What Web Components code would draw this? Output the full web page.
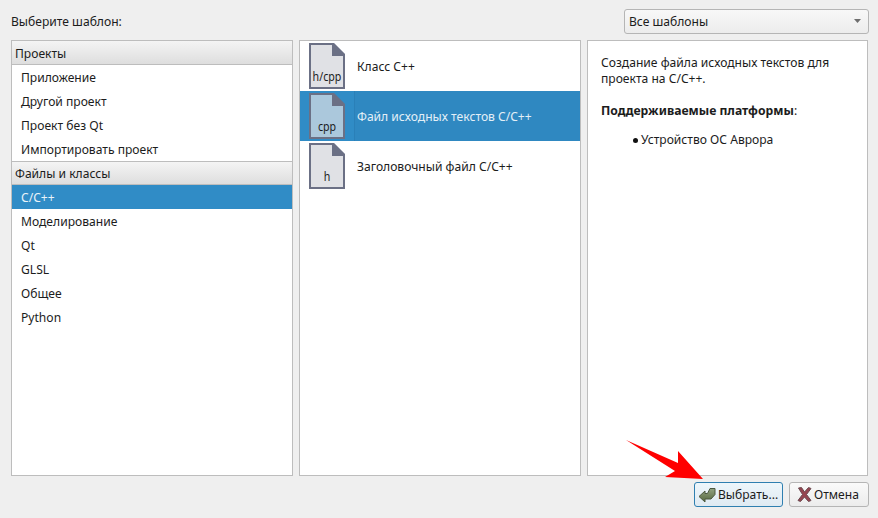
<!DOCTYPE html>
<html>
<head>
<meta charset="utf-8">
<title>Новый файл</title>
<style>
  html, body { margin: 0; height: 100%; }
  body { background: #efefef; }
</style>
</head>
<body>
<template id="file-icon-tpl">
  <style>
    :host { display: block; width: 36px; height: 46px; position: relative; flex: none; }
    svg { display: block; }
    span {
      position: absolute; left: 0; right: 0; bottom: 5px; text-align: center;
      font-size: 13px; line-height: 16px; color: #1c1c1c;
      transform: scaleX(.82);
    }
  </style>
  <svg width="36" height="46" viewBox="0 0 36 46">
    <path id="sheet" d="M1 1H24L35 12V45H1Z" fill="#e0e1e5" stroke="#6b7085" stroke-width="2"/>
    <path d="M23 0H25L36 11V13H23Z" fill="#6b7085"/>
  </svg>
  <span><slot></slot></span>
</template>

<wizard-dialog>
</wizard-dialog>

<script>
const appFont = '"Noto Sans", "Open Sans", sans-serif';

class FileIcon extends HTMLElement {
  constructor() {
    super();
    this.attachShadow({ mode: 'open' });
    this.shadowRoot.appendChild(document.getElementById('file-icon-tpl').content.cloneNode(true));
  }
  connectedCallback() {
    if (this.hasAttribute('selected')) {
      this.shadowRoot.querySelector('#sheet').setAttribute('fill', '#abc8dc');
    }
  }
}

class CategoryHeader extends HTMLElement {
  constructor() {
    super();
    this.attachShadow({ mode: 'open' });
    this.shadowRoot.innerHTML = `
      <style>
        :host {
          display: flex; align-items: center; height: 21px; padding: 2px 0 0 3px;
          background: linear-gradient(#f4f4f4, #dedede);
          border-bottom: 1px solid #bdbdbd;
          color: #1c1c1c;
        }
        :host([divided]) { border-top: 1px solid #bdbdbd; padding-top: 1px; }
      </style>
      <slot></slot>`;
  }
}

class CategoryItem extends HTMLElement {
  constructor() {
    super();
    this.attachShadow({ mode: 'open' });
    this.shadowRoot.innerHTML = `
      <style>
        :host {
          display: flex; align-items: center; height: 24px; box-sizing: border-box; padding: 1px 0 0 9px;
          color: #1c1c1c;
        }
        :host([selected]) { background: #308cc6; color: #eaf3f9; }
      </style>
      <slot></slot>`;
  }
}

class TemplateRow extends HTMLElement {
  constructor() {
    super();
    this.attachShadow({ mode: 'open' });
    this.shadowRoot.innerHTML = `
      <style>
        :host {
          display: flex; align-items: center; height: 50px; padding-left: 9px;
          color: #1c1c1c; box-sizing: border-box;
        }
        :host([selected]) { background: #308cc6; color: #e3eff7; }
        .label { display: flex; align-items: center; height: 100%; margin-left: 9px; padding: 1px 0 0 3px; flex: 1; box-sizing: border-box; }
        :host([selected]) .label { border-left: 1px solid #2a80b8; padding-left: 2px; background: #2f88c1; }
      </style>
      <slot name="icon"></slot>
      <div class="label"><slot></slot></div>`;
  }
}

class ListPanel extends HTMLElement {
  constructor() {
    super();
    this.attachShadow({ mode: 'open' });
    this.shadowRoot.innerHTML = `
      <style>
        :host {
          display: block; background: #fff; border: 1px solid #bdbdbd;
          box-sizing: border-box; min-width: 0;
        }
      </style>
      <slot></slot>`;
  }
}

class ComboBox extends HTMLElement {
  constructor() {
    super();
    this.attachShadow({ mode: 'open' });
    this.shadowRoot.innerHTML = `
      <style>
        :host {
          display: flex; align-items: center; justify-content: space-between;
          width: 245px; height: 25px; box-sizing: border-box; padding: 1px 5px 0 4px;
          border: 1px solid #b5b5b5; border-radius: 3px;
          background: linear-gradient(#f8f8f8, #ececec);
          color: #1c1c1c;
        }
        svg { display: block; margin: -2px 2px 0 0; }
      </style>
      <slot></slot>
      <svg width="7" height="4" viewBox="0 0 7 4"><path d="M0 0H7L3.5 4Z" fill="#6e6e6e"/></svg>`;
  }
}

class PushButton extends HTMLElement {
  constructor() {
    super();
    this.attachShadow({ mode: 'open' });
    this.shadowRoot.innerHTML = `
      <style>
        :host {
          display: flex; align-items: center; height: 25px; box-sizing: border-box;
          gap: 2px; padding-left: 3px;
          border: 1px solid #b5b5b5; border-radius: 3px;
          background: linear-gradient(#fafafa, #ececec);
          color: #1c1c1c;
        }
        :host([default]) {
          border-color: #2f7fb0;
          background: linear-gradient(#eef6fb, #dfeaf2);
        }
      </style>
      <slot name="icon"></slot><slot></slot>`;
  }
}

class WizardDialog extends HTMLElement {
  constructor() {
    super();
    this.attachShadow({ mode: 'open' });
    this.shadowRoot.innerHTML = `
      <style>
        :host {
          display: flex; flex-direction: column; height: 518px; box-sizing: border-box;
          padding: 9px 9px 11px 11px; position: relative; overflow: hidden;
          font: 12.1px/16px ${appFont}; color: #1c1c1c;
        }
        .top { display: flex; align-items: center; justify-content: space-between; height: 24px; }
        .top > span { padding-top: 1px; }
        .panels { display: grid; grid-template-columns: 282px 282px 281px; gap: 6px; height: 436px; margin-top: 7px; }
        .info { padding: 14px 13px; line-height: 16px; }
        .info p { margin: 0; }
        .info b { font-weight: 700; font-size: 12.2px; }
        .info .platforms { margin-top: 16px; }
        .info ul { margin: 13px 0 0; padding: 0 0 0 40px; list-style: none; }
        .info li { display: flex; align-items: center; gap: 3px; }
        .info li::before { content: ''; width: 5px; height: 5px; border-radius: 50%; background: #111; margin-left: -8px; }
        .buttons { display: flex; justify-content: flex-end; gap: 6px; margin-top: 6px; }
        .ok { width: 89px; box-sizing: border-box; }
        .cancel { width: 80px; box-sizing: border-box; padding-left: 7px; }
        .arrow { position: absolute; left: 620px; top: 434px; }
      </style>
      <div class="top">
        <span>Выберите шаблон:</span>
        <combo-box>Все шаблоны</combo-box>
      </div>
      <div class="panels">
        <list-panel>
          <category-header>Проекты</category-header>
          <category-item>Приложение</category-item>
          <category-item>Другой проект</category-item>
          <category-item>Проект без Qt</category-item>
          <category-item>Импортировать проект</category-item>
          <category-header divided>Файлы и классы</category-header>
          <category-item selected>C/C++</category-item>
          <category-item>Моделирование</category-item>
          <category-item>Qt</category-item>
          <category-item>GLSL</category-item>
          <category-item>Общее</category-item>
          <category-item>Python</category-item>
        </list-panel>
        <list-panel>
          <template-row><file-icon slot="icon">h/cpp</file-icon>Класс C++</template-row>
          <template-row selected><file-icon slot="icon" selected>cpp</file-icon>Файл исходных текстов C/C++</template-row>
          <template-row><file-icon slot="icon">h</file-icon>Заголовочный файл C/C++</template-row>
        </list-panel>
        <list-panel class="info">
          <p>Создание файла исходных текстов для<br>проекта на C/C++.</p>
          <p class="platforms"><b>Поддерживаемые платформы</b>:</p>
          <ul><li>Устройство ОС Аврора</li></ul>
        </list-panel>
      </div>
      <div class="buttons">
        <push-button default class="ok">
          <svg slot="icon" width="18" height="16" viewBox="0 0 18 16">
            <defs><linearGradient id="g" x1="0" y1="0" x2="0" y2="1"><stop offset="0" stop-color="#93a382"/><stop offset="1" stop-color="#56683f"/></linearGradient></defs>
            <path d="M1 9.5L7 4V6.5H9.5L12 1.5H17V7.5L13 12H7V15Z" fill="url(#g)" stroke="#4c5840" stroke-width="1" stroke-linejoin="round"/>
          </svg>
          Выбрать...
        </push-button>
        <push-button class="cancel">
          <svg slot="icon" width="15" height="15" viewBox="0 0 15 15">
            <path d="M1.5 1L4.5 .5L7.5 5L11.5 .5L14 1.5L9.5 7.5L14 13.5L11.5 14.5L7.5 10L3.5 14.5L1 13.5L5.5 7.5Z" fill="#96444f" stroke="#6c4a50" stroke-width="1" stroke-linejoin="round"/>
          </svg>
          Отмена
        </push-button>
      </div>
      <svg class="arrow" width="90" height="56" viewBox="620 434 90 56">
        <path d="M626 440L678 463V451L703 479L665 477L675 471Z" fill="#ff0000"/>
      </svg>`;
  }
}

customElements.define('file-icon', FileIcon);
customElements.define('category-header', CategoryHeader);
customElements.define('category-item', CategoryItem);
customElements.define('template-row', TemplateRow);
customElements.define('list-panel', ListPanel);
customElements.define('combo-box', ComboBox);
customElements.define('push-button', PushButton);
customElements.define('wizard-dialog', WizardDialog);
</script>
</body>
</html>
